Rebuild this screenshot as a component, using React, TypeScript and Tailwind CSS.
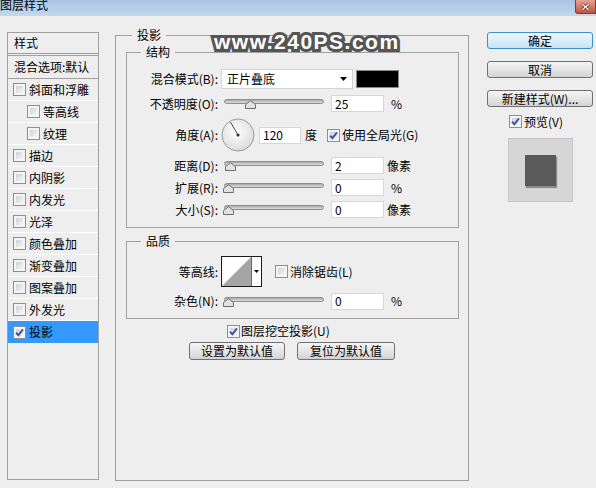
import React from 'react'

const styleItems = [
  { name: '斜面和浮雕' },
  { name: '等高线', sub: true },
  { name: '纹理', sub: true },
  { name: '描边' },
  { name: '内阴影' },
  { name: '内发光' },
  { name: '光泽' },
  { name: '颜色叠加' },
  { name: '渐变叠加' },
  { name: '图案叠加' },
  { name: '外发光' },
  { name: '投影', checked: true, active: true },
]

function Checkbox({ checked = false }: { checked?: boolean }) {
  return (
    <span className="relative inline-block h-[13px] w-[13px] shrink-0 border border-[#8e8f8f] bg-[#f4f4f4] p-[2px]">
      <span className="block h-full w-full bg-gradient-to-br from-[#cdd0d5] to-[#f7f7f7]" />
      {checked && (
        <svg className="absolute left-[1px] top-[1px]" width="9" height="9" viewBox="0 0 9 9">
          <path d="M1 4.6L3.4 7.2L8 1.4" fill="none" stroke="#3d56a8" strokeWidth="2" />
        </svg>
      )}
    </span>
  )
}

function Slider({ value }: { value: number }) {
  return (
    <div className="relative h-[17px] w-[102px] shrink-0">
      <div className="absolute left-[2px] right-0 top-[4px] h-[5px] rounded-full border border-[#8d8d8d] bg-gradient-to-b from-[#a9a9a9] to-[#dedede]" />
      <svg
        className="absolute top-[5px]"
        style={{ left: 1 + value * 0.88 }}
        width="11"
        height="9"
        viewBox="0 0 11 9"
      >
        <path d="M0.5 8.5V4.6L5.5 0.7L10.5 4.6V8.5Z" fill="#e2e2e2" stroke="#6f6f6f" />
      </svg>
    </div>
  )
}

function NumberBox({ value, w = 'w-[53px]' }: { value: string; w?: string }) {
  return (
    <div className={`flex h-[17px] shrink-0 items-center border border-[#d6d6d6] bg-white pl-[3px] text-[12px] ${w}`}>
      {value}
    </div>
  )
}

function Label({ children }: { children: React.ReactNode }) {
  return <div className="w-[91px] shrink-0 text-right">{children}</div>
}

function SliderRow({ label, value, unit }: { label: string; value: number; unit: string }) {
  return (
    <div className="mt-[5px] flex h-[17px] items-center">
      <Label>{label}</Label>
      <div className="ml-[4px]">
        <Slider value={value} />
      </div>
      <div className="ml-[7px]">
        <NumberBox value={String(value)} />
      </div>
      <span className={unit === '%' ? 'ml-[7px]' : 'ml-[3px]'}>{unit}</span>
    </div>
  )
}

function Button({ children, primary = false, className = '' }: { children: React.ReactNode; primary?: boolean; className?: string }) {
  return (
    <button
      className={`flex h-[17px] items-center justify-center rounded-[3px] border leading-none ${
        primary
          ? 'border-[#3c8fc8] bg-gradient-to-b from-[#eef7fd] via-[#dcedf9] to-[#c4e3f6]'
          : 'border-[#707070] bg-gradient-to-b from-[#f4f4f4] via-[#e6e6e6] to-[#d2d2d2]'
      } ${className}`}
    >
      {children}
    </button>
  )
}

function Dial() {
  return (
    <svg width="34" height="34" viewBox="0 0 34 34">
      <defs>
        <radialGradient id="dialFill" cx="45%" cy="40%" r="65%">
          <stop offset="0" stopColor="#ffffff" />
          <stop offset="1" stopColor="#d9d9d9" />
        </radialGradient>
      </defs>
      <circle cx="17" cy="17" r="16" fill="url(#dialFill)" stroke="#9b9b9b" />
      <line x1="17" y1="17" x2="9.6" y2="4.2" stroke="#4a4a4a" strokeWidth="1" />
      <circle cx="17" cy="17" r="1.6" fill="#333" />
    </svg>
  )
}

export default function App() {
  return (
    <div className="relative h-[488px] w-[596px] overflow-hidden bg-[#eeeeee] font-['Noto_Sans_CJK_SC',sans-serif] text-[12px] leading-[14px] text-black">
      {/* title bar */}
      <div className="flex h-[16px] items-start bg-gradient-to-b from-[#a9c4e4] to-[#c4d8ee]">
        <span className="-mt-[2px] text-[12px]">图层样式</span>
        <div className="ml-auto flex h-[14px] w-[21px] items-center justify-center rounded-bl-[3px] border border-t-0 border-[#8a3b33] bg-gradient-to-b from-[#e4a395] to-[#c2503c]">
          <svg width="9" height="8" viewBox="0 0 9 8">
            <path d="M1 1L8 7M8 1L1 7" stroke="#5a1c16" strokeWidth="2.6" />
            <path d="M1 1L8 7M8 1L1 7" stroke="#ffffff" strokeWidth="1.4" />
          </svg>
        </div>
      </div>

      <div className="flex pt-[11px]">
        {/* style list */}
        <div className="ml-[7px] mt-[5px] h-[448px] w-[92px] shrink-0 border border-[#a0a0a0]">
          <div className="flex h-[21px] items-center border-b border-[#a0a0a0] pl-[6px]">样式</div>
          <div className="h-[1px]" />
          <div className="flex h-[24px] items-center border-y border-[#a0a0a0] pl-[6px]">混合选项:默认</div>
          {styleItems.map((item) => (
            <div
              key={item.name}
              className={`flex h-[22px] items-center gap-[3px] ${item.sub ? 'pl-[19px]' : 'pl-[5px]'} ${
                item.active ? 'bg-[#3399ff]' : 'border-b border-white'
              }`}
            >
              <Checkbox checked={item.checked} />
              <span>{item.name}</span>
            </div>
          ))}
        </div>

        {/* main group */}
        <fieldset className="ml-[16px] h-[454px] w-[354px] shrink-0 border border-[#a0a0a0] pl-[10px] pr-[9px]">
          <legend className="ml-[6px] px-[5px] leading-[16px]">投影</legend>

          <fieldset className="mt-[1px] border border-[#a0a0a0] pb-[9px]">
            <legend className="ml-[14px] px-[5px] leading-[16px]">结构</legend>

            <div className="mt-[9px] flex h-[20px] items-center">
              <Label>混合模式(B):</Label>
              <div className="ml-[3px] flex h-[20px] w-[132px] items-center border border-[#d4d4d4] bg-white pl-[5px]">
                <span>正片叠底</span>
                <svg className="ml-auto mr-[5px]" width="7" height="4" viewBox="0 0 7 4">
                  <path d="M0 0H7L3.5 4Z" fill="#000" />
                </svg>
              </div>
              <div className="ml-[3px] h-[18px] w-[43px] border border-[#8a8a8a] bg-black" />
            </div>

            <div className="mt-[6px] flex h-[17px] items-center">
              <Label>不透明度(O):</Label>
              <div className="ml-[4px]">
                <Slider value={25} />
              </div>
              <div className="ml-[7px]">
                <NumberBox value="25" />
              </div>
              <span className="ml-[7px]">%</span>
            </div>

            <div className="mt-[6px] flex h-[34px] items-center">
              <Label>角度(A):</Label>
              <div className="ml-[3px]">
                <Dial />
              </div>
              <div className="ml-[4px]">
                <NumberBox value="120" w="w-[42px]" />
              </div>
              <span className="ml-[4px]">度</span>
              <span className="ml-[10px] flex">
                <Checkbox checked />
              </span>
              <span className="ml-[2px]">使用全局光(G)</span>
            </div>

            <SliderRow label="距离(D):" value={2} unit="像素" />
            <SliderRow label="扩展(R):" value={0} unit="%" />
            <SliderRow label="大小(S):" value={0} unit="像素" />
          </fieldset>

          <fieldset className="mt-[5px] border border-[#a0a0a0] pb-[9px]">
            <legend className="ml-[14px] px-[5px] leading-[16px]">品质</legend>

            <div className="mt-[7px] flex h-[31px] items-center">
              <Label>等高线:</Label>
              <div className="ml-[3px] flex h-[31px] w-[41px] border border-[#1a1a1a] bg-white">
                <svg width="29" height="29" viewBox="0 0 29 29">
                  <path d="M0 29L29 0V29Z" fill="#a5a5a5" />
                </svg>
                <div className="flex w-[10px] items-center justify-center border-l border-[#6a6a6a]">
                  <svg width="5" height="3" viewBox="0 0 5 3">
                    <path d="M0 0H5L2.5 3Z" fill="#000" />
                  </svg>
                </div>
              </div>
              <span className="ml-[13px] flex">
                <Checkbox />
              </span>
              <span className="ml-[2px]">消除锯齿(L)</span>
            </div>

            <div className="mt-[6px] flex h-[16px] items-center">
              <Label>杂色(N):</Label>
              <div className="ml-[4px]">
                <Slider value={0} />
              </div>
              <div className="ml-[7px]">
                <NumberBox value="0" />
              </div>
              <span className="ml-[7px]">%</span>
            </div>
          </fieldset>

          <div className="mt-[5px] flex h-[14px] items-center pl-[101px]">
            <Checkbox checked />
            <span className="ml-[1px]">图层挖空投影(U)</span>
          </div>

          <div className="mt-[4px] flex pl-[63px]">
            <Button className="h-[18px] w-[96px]">设置为默认值</Button>
            <Button className="ml-[12px] h-[18px] w-[98px]">复位为默认值</Button>
          </div>
        </fieldset>

        {/* right column */}
        <div className="ml-[18px] flex w-[106px] shrink-0 flex-col pt-[5px]">
          <Button primary className="w-[106px]">确定</Button>
          <Button className="mt-[12px] w-[106px]">取消</Button>
          <Button className="mt-[12px] w-[106px]">新建样式(W)...</Button>
          <div className="mt-[8px] flex h-[13px] items-center pl-[22px]">
            <Checkbox checked />
            <span className="ml-[2px]">预览(V)</span>
          </div>
          <div className="ml-[21px] mt-[10px] flex h-[64px] w-[65px] items-center justify-center border border-[#c6c6c6] bg-[#d6d6d6]">
            <div className="h-[31px] w-[31px] bg-[#5a5a5a] shadow-[1px_2px_1px_#8c8c8c]" />
          </div>
        </div>
      </div>

      {/* watermark */}
      <div className="absolute left-[214px] top-[31px] font-['Liberation_Sans',sans-serif] text-[21px] font-bold leading-[21px] tracking-[1.5px] text-white [-webkit-text-stroke:6px_#555555] [paint-order:stroke_fill]">
        www.240PS.com
      </div>
    </div>
  )
}
